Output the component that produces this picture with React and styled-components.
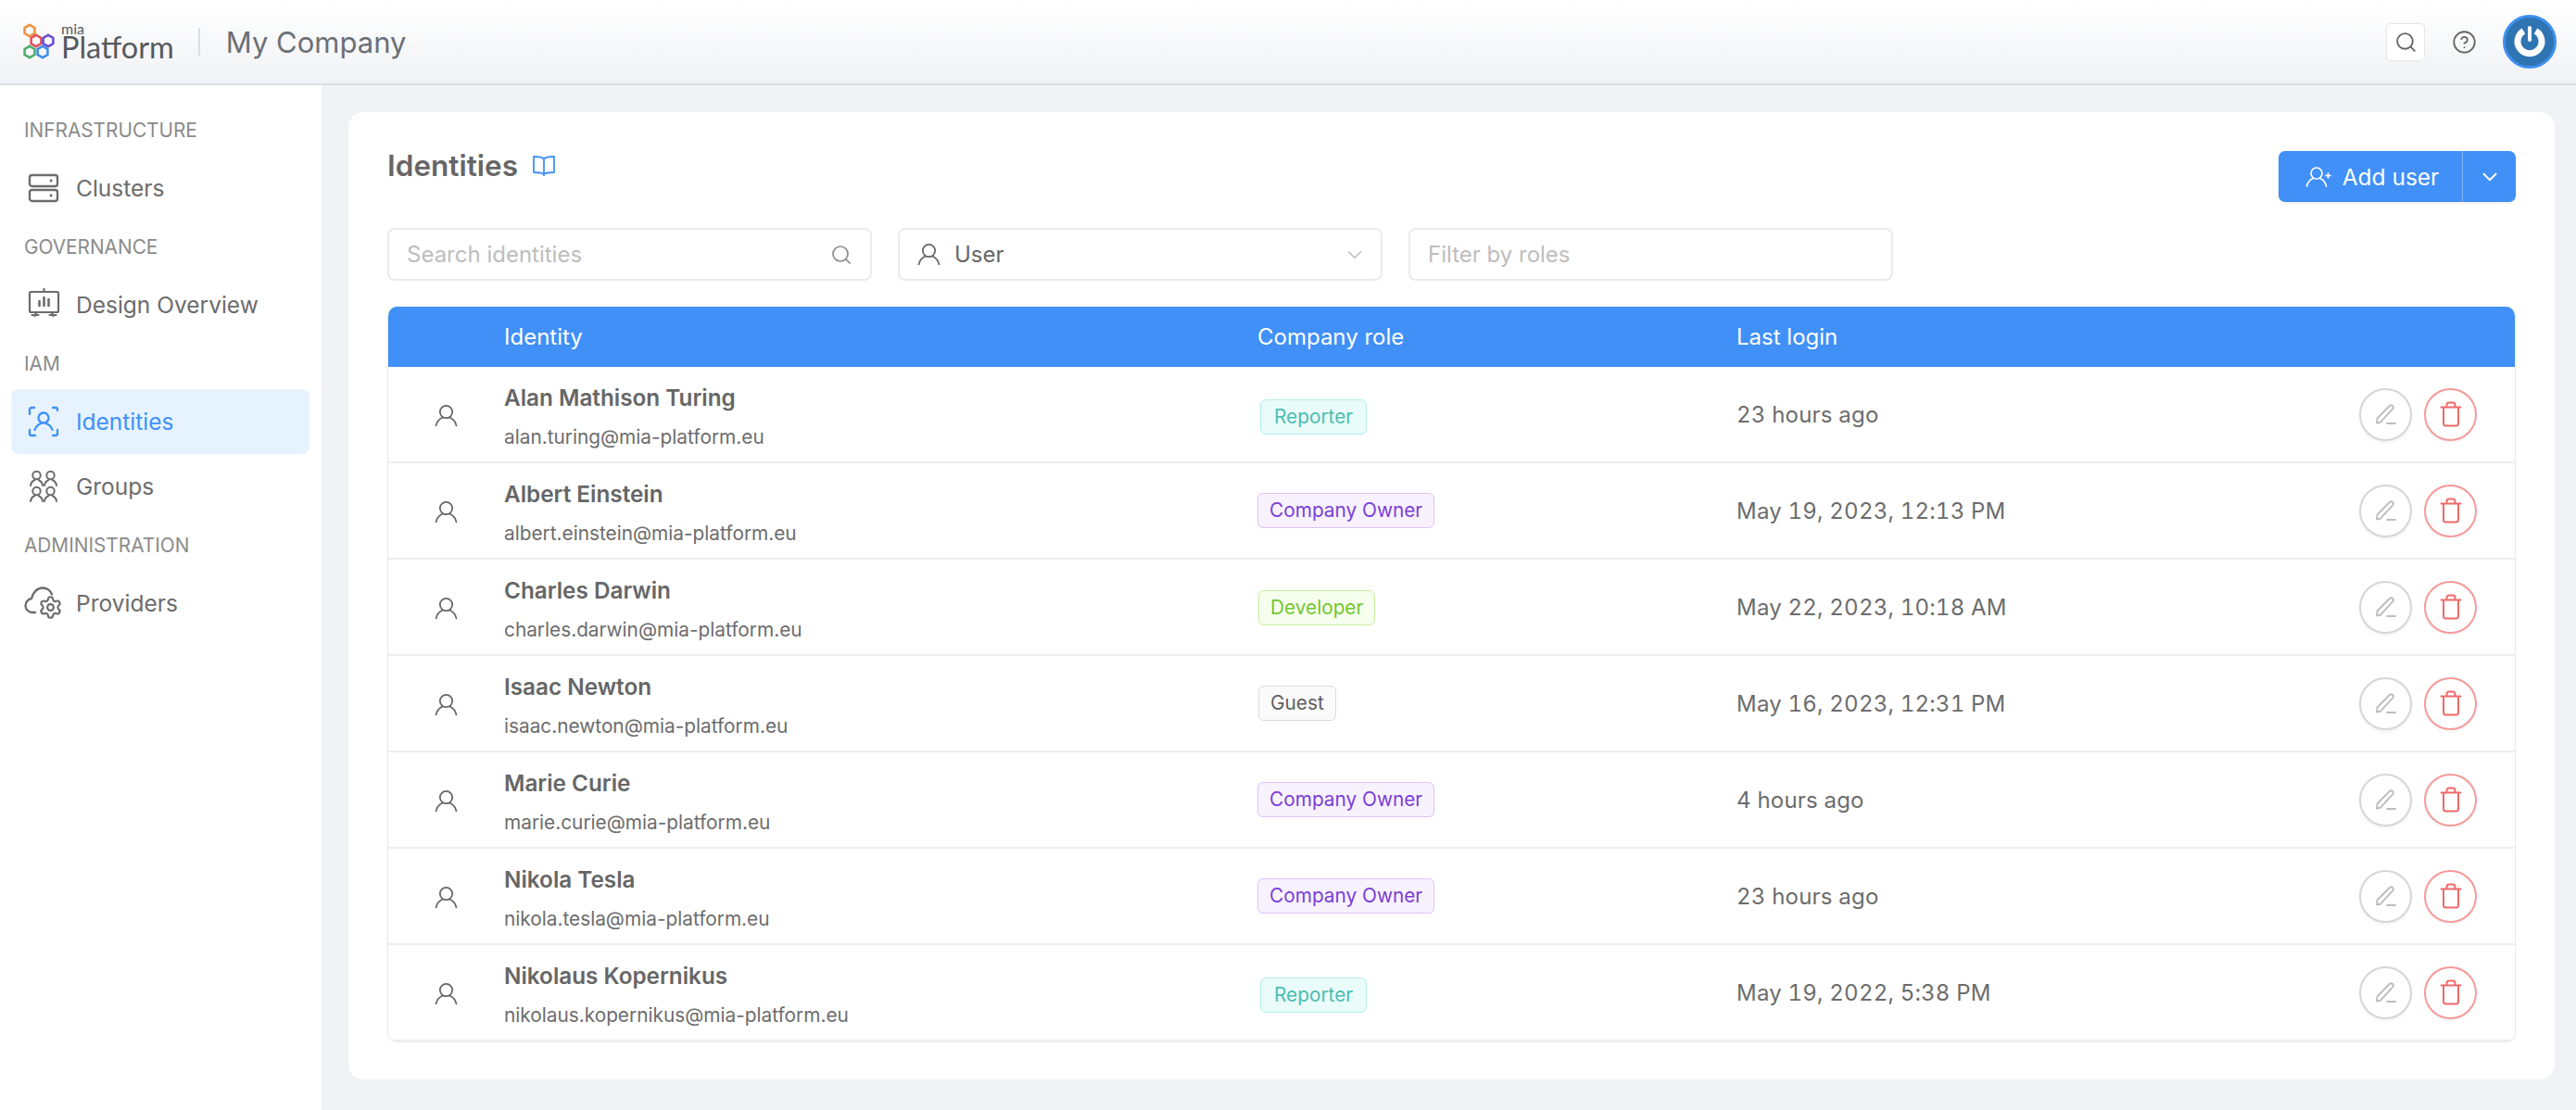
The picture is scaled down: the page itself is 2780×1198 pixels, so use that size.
import styled, { createGlobalStyle } from "styled-components";
import { ChevronDown, CircleHelp, Search, Settings } from "lucide-react";

const GlobalStyle = createGlobalStyle`
  html, body {
    margin: 0;
    padding: 0;
    background: #f0f2f6;
    font-family: Inter, "Noto Sans", sans-serif;
    overflow: hidden;
  }
  * {
    box-sizing: border-box;
  }
`;

const Page = styled.div`
  width: 2780px;
  height: 1198px;
  display: flex;
  flex-direction: column;
`;

const Header = styled.header`
  height: 92px;
  flex: none;
  display: flex;
  align-items: center;
  padding: 0 21px 0 25px;
  background: linear-gradient(180deg, #ffffff 0%, #f1f2f5 100%);
  border-bottom: 2px solid #dcdde0;
`;

const Logo = styled.div`
  display: flex;
  align-items: center;
  gap: 5px;
`;

const LogoWord = styled.div`
  display: flex;
  flex-direction: column;
  color: #555a5e;
  font-family: Lato, sans-serif;
`;

const LogoMia = styled.span`
  font-size: 16px;
  line-height: 11px;
`;

const LogoPlatform = styled.span`
  font-size: 32.5px;
  line-height: 30px;
`;

const HeaderDivider = styled.div`
  width: 2px;
  height: 30px;
  margin: 0 28px 0 26px;
  background: #dcdde0;
`;

const CompanyName = styled.div`
  font-size: 31px;
  color: #6b6f75;
`;

const HeaderActions = styled.div`
  margin-left: auto;
  display: flex;
  align-items: center;
`;

const HeaderSearch = styled.div`
  width: 42px;
  height: 41px;
  display: flex;
  align-items: center;
  justify-content: center;
  background: #fff;
  border: 1px solid #e6e6e6;
  border-radius: 5px;
  color: #666;
`;

const HelpIcon = styled(CircleHelp)`
  margin: 0 28px 0 29px;
  color: #666;
`;

const Avatar = styled.div`
  width: 58px;
  height: 58px;
  border-radius: 50%;
  background: #2f74b2;
  border: 3px solid #3d8fee;
  display: flex;
  align-items: center;
  justify-content: center;
`;

const Body = styled.div`
  flex: 1;
  display: flex;
  min-height: 0;
`;

const Sidebar = styled.nav`
  width: 347px;
  flex: none;
  padding: 20px 13px 0 12px;
  background: #fff;
`;

const SectionLabel = styled.div`
  height: 56px;
  padding-left: 14px;
  display: flex;
  align-items: center;
  font-size: 20.8px;
  color: #8b8b8b;
`;

const NavItem = styled.div`
  height: 70px;
  display: flex;
  align-items: center;
  gap: 17px;
  padding-left: 17px;
  border-radius: 8px;
  font-size: 24.5px;
  color: ${(p) => (p.$active ? "#3f90f7" : "#6c6c6c")};
  background: ${(p) => (p.$active ? "#e6f3fe" : "transparent")};
`;

const NavIcon = styled.span`
  width: 36px;
  flex: none;
  display: flex;
  justify-content: center;
`;

const Main = styled.main`
  flex: 1;
  min-width: 0;
  padding: 29px 23px 33px 29px;
`;

const Card = styled.section`
  height: 100%;
  padding: 42px;
  background: #fff;
  border-radius: 16px;
`;

const TitleRow = styled.div`
  display: flex;
  justify-content: space-between;
  align-items: flex-start;
`;

const TitleGroup = styled.div`
  display: flex;
  align-items: center;
  gap: 15px;
  height: 32px;
`;

const Title = styled.h1`
  margin: 0;
  font-size: 31.5px;
  line-height: 32px;
  font-weight: 600;
  color: #666;
`;

const SplitButton = styled.div`
  width: 256px;
  height: 55px;
  display: flex;
  color: #fff;
  background: #4090f7;
  border-radius: 7px;
  box-shadow: 0 2px 3px rgba(0, 0, 0, 0.06);
`;

const AddButton = styled.div`
  width: 199px;
  display: flex;
  align-items: center;
  justify-content: center;
  gap: 12px;
  padding-left: 4px;
  font-size: 24.5px;
  border-right: 1px solid #7fb4f9;
`;

const MoreButton = styled.div`
  flex: 1;
  display: flex;
  align-items: center;
  justify-content: center;
`;

const Filters = styled.div`
  margin: 28px 0;
  display: flex;
  gap: 28px;
`;

const Field = styled.div`
  width: 523px;
  height: 57px;
  display: flex;
  align-items: center;
  justify-content: space-between;
  padding: ${(p) => (p.$select ? "0 15px 0 19px" : "0 19px")};
  font-size: 24px;
  border: 2px solid #ebebeb;
  border-radius: 8px;
  color: ${(p) => (p.$select ? "#666" : "#bdbdbd")};
`;

const FieldValue = styled.div`
  display: flex;
  align-items: center;
  gap: 15px;
`;

const FieldIcon = styled.span`
  display: flex;
  color: ${(p) => p.$color};
`;

const Table = styled.div`
  border: 1px solid #e9e9e9;
  border-top: 0;
  border-radius: 10px;
  overflow: hidden;
`;

const rowColumns = `
  display: grid;
  grid-template-columns: 125px 813px 517px 1fr;
  align-items: center;
`;

const TableHead = styled.div`
  ${rowColumns}
  height: 65px;
  margin: 0 -1px;
  padding-left: 1px;
  font-size: 24px;
  color: #fff;
  background: #4090f7;
`;

const Row = styled.div`
  ${rowColumns}
  height: 104px;
  border-bottom: 2px solid #eeeeee;
`;

const UserCell = styled.div`
  display: flex;
  justify-content: center;
  padding: 2px 0 0 0;
  color: #666;
`;

const Identity = styled.div`
  padding-top: 6px;
  display: flex;
  flex-direction: column;
  gap: 13px;
`;

const Name = styled.div`
  font-size: 24.3px;
  line-height: 29px;
  font-weight: 600;
  color: #666;
`;

const Email = styled.div`
  font-size: 20.8px;
  line-height: 29px;
  color: #6c6c6c;
`;

const Tag = styled.span`
  display: inline-block;
  height: 38px;
  padding: ${(p) => p.$tone.padding};
  font-size: 20.8px;
  line-height: 35px;
  border: 1px solid ${(p) => p.$tone.border};
  border-radius: 6px;
  color: ${(p) => p.$tone.color};
  background: ${(p) => p.$tone.bg};
  margin: ${(p) => p.$tone.margin};
`;

const LastLogin = styled.div`
  font-size: 24px;
  letter-spacing: 0.2px;
  font-variant-numeric: tabular-nums;
  color: #6c6c6c;
`;

const LoginCell = styled.div`
  display: flex;
  align-items: center;
  justify-content: space-between;
`;

const Actions = styled.div`
  display: flex;
  justify-content: flex-end;
  gap: 13px;
  padding-right: 41px;
`;

const RoundButton = styled.div`
  width: 57px;
  height: 57px;
  display: flex;
  align-items: center;
  justify-content: center;
  border-radius: 50%;
  background: #fff;
  border: 2px solid ${(p) => (p.$danger ? "#f59a9a" : "#d6d6d6")};
  color: ${(p) => (p.$danger ? "#ee6a6a" : "#bdbdbd")};
  box-shadow: 0 2px 3px rgba(0, 0, 0, 0.05);
`;

const TONES = {
  Reporter: { color: "#4dbdb1", bg: "#e9fcfa", border: "#b5efe8", margin: "6px 0 0 3px", padding: "0 14px" },
  "Company Owner": { color: "#7a3fd6", bg: "#f8f1fe", border: "#dcc3f6", margin: "0", padding: "0 12px" },
  Developer: { color: "#74c62f", bg: "#f6ffed", border: "#c5eea2", margin: "2px 0 0 1px", padding: "0 12px" },
  Guest: { color: "#5f5f5f", bg: "#fafafa", border: "#dcdcdc", margin: "0 0 0 1px", padding: "0 12px" },
};

const USERS = [
  { name: "Alan Mathison Turing", email: "alan.turing@mia-platform.eu", role: "Reporter", login: "23 hours ago" },
  { name: "Albert Einstein", email: "albert.einstein@mia-platform.eu", role: "Company Owner", login: "May 19, 2023, 12:13 PM" },
  { name: "Charles Darwin", email: "charles.darwin@mia-platform.eu", role: "Developer", login: "May 22, 2023, 10:18 AM" },
  { name: "Isaac Newton", email: "isaac.newton@mia-platform.eu", role: "Guest", login: "May 16, 2023, 12:31 PM" },
  { name: "Marie Curie", email: "marie.curie@mia-platform.eu", role: "Company Owner", login: "4 hours ago" },
  { name: "Nikola Tesla", email: "nikola.tesla@mia-platform.eu", role: "Company Owner", login: "23 hours ago" },
  { name: "Nikolaus Kopernikus", email: "nikolaus.kopernikus@mia-platform.eu", role: "Reporter", login: "May 19, 2022, 5:38 PM" },
];

const stroke = { fill: "none", stroke: "currentColor", strokeLinecap: "round", strokeLinejoin: "round" };

const UserIcon = ({ size = 25, width = 1.7 }) => (
  <svg width={size} height={size} viewBox="0 0 24 24" {...stroke} strokeWidth={width}>
    <circle cx="12" cy="8.2" r="6.4" />
    <path d="M1.5 22.5c.8-4 3.4-7 6.8-8.600M22.500 22.500c-.8-4-3.400-7-6.800-8.600" />
  </svg>
);

const Hexagon = ({ x, y, color }) => (
  <polygon
    points={`${x},${y - 6.2} ${x + 5.4},${y - 3.1} ${x + 5.4},${y + 3.1} ${x},${y + 6.2} ${x - 5.4},${y + 3.1} ${x - 5.4},${y - 3.1}`}
    fill="none"
    stroke={color}
    strokeWidth="2.6"
  />
);

const LogoMark = () => (
  <svg width="36" height="40" viewBox="0 0 36 40">
    <Hexagon x={7} y={8} color="#ef9440" />
    <Hexagon x={14} y={19} color="#e2525c" />
    <Hexagon x={27} y={19} color="#6a4fd0" />
    <Hexagon x={7} y={31} color="#4fae6c" />
    <Hexagon x={21} y={31} color="#4090e6" />
  </svg>
);

const PowerIcon = () => (
  <svg width="40" height="40" viewBox="0 0 40 40" fill="none" stroke="#fff" strokeLinecap="round">
    <path d="M13.5 8.5a13 13 0 1 0 13 0" strokeWidth="7" strokeLinecap="butt" />
    <path d="M20 5v13" strokeWidth="4" />
  </svg>
);

const ClustersIcon = () => (
  <svg width="34" height="34" viewBox="0 0 34 34" {...stroke} strokeWidth="2.4">
    <rect x="2" y="3" width="30" height="12" rx="2.5" />
    <rect x="2" y="19" width="30" height="12" rx="2.5" />
    <path d="M25 9h.2M25 25h.2" strokeWidth="2.8" />
  </svg>
);

const OverviewIcon = () => (
  <svg width="35" height="36" viewBox="0 0 34 36" {...stroke} strokeWidth="2.2">
    <path d="M17 1v3" />
    <rect x="1.5" y="4" width="31" height="22" rx="1.5" />
    <path d="M12 14v5M17 10v9M22 12v7" strokeWidth="2.6" />
    <path d="M7 30l2-4M27 30l-2-4M4 29h7M23 29h7" />
  </svg>
);

const IdentitiesIcon = () => (
  <svg width="34" height="34" viewBox="0 0 34 34" {...stroke} strokeWidth="2.3">
    <path d="M2 9V4a2 2 0 0 1 2-2h3M27 2h3a2 2 0 0 1 2 2v1M2 26v4a2 2 0 0 0 2 2h4M32 26v4a2 2 0 0 1-2 2h-3" />
    <circle cx="17" cy="13" r="5.500" />
    <path d="M7.500 26c1.200-3.500 3.600-6 7-7M26.500 26c-1.200-3.500-3.600-6-7-7" />
  </svg>
);

const GroupPerson = ({ x, y }) => (
  <g transform={`translate(${x} ${y})`}>
    <circle cx="7.5" cy="5" r="4.2" />
    <path d="M1 16c.4-3 2.200-5 4.400-6M14 16c-.4-3-2.200-5-4.400-6" />
  </g>
);

const GroupsIcon = () => (
  <svg width="34" height="34" viewBox="0 0 34 34" {...stroke} strokeWidth="2">
    <GroupPerson x={2} y={0} />
    <GroupPerson x={17} y={0} />
    <GroupPerson x={2} y={17} />
    <GroupPerson x={17} y={17} />
  </svg>
);

const ProvidersIcon = () => (
  <svg width="42" height="36" viewBox="0 0 42 36" {...stroke} strokeWidth="2.3" style={{ flex: "none" }}>
    <path d="M12 28H9C4.500 28 1.500 24.500 1.500 20.500c0-4 3-7 6.500-7.500C9.500 6.500 14 1.500 20 1.500c4.500 0 8.500 3 10 7" />
    <Settings x="15" y="9" width="27" height="27" strokeWidth="1.9" />
  </svg>
);

const BookIcon = () => (
  <svg width="26" height="24" viewBox="0 0 26 24" fill="none" stroke="#4090f7" strokeWidth="1.8" strokeLinejoin="round">
    <path d="M13 4.500C11 2.500 8 2 2 2v17c6 0 9 .5 11 2 2-1.500 5-2 11-2V2c-6 0-9 .5-11 2.500zM13 4.500V23" />
  </svg>
);

const AddUserIcon = () => (
  <svg width="28" height="24" viewBox="0 0 28 24" {...stroke} strokeWidth="1.7">
    <circle cx="12" cy="8" r="6" />
    <path d="M1.500 22c.8-4 3.400-7 6.800-8.500M22.500 22c-.8-4-3.400-7-6.800-8.500M22 10.500h5M24.500 8v5" />
  </svg>
);

const EditIcon = () => (
  <svg width="24" height="24" viewBox="0 0 24 24" {...stroke} strokeWidth="1.9">
    <path d="M2 21.500l.5-5L15.800 3a2.300 2.300 0 0 1 3.300 3.300L5.800 20.800z" />
    <path d="M13 22h9" />
  </svg>
);

const TrashIcon = () => (
  <svg width="24" height="28" viewBox="0 0 24 28" {...stroke} strokeWidth="2">
    <path d="M1.500 6.500h21M4 6.500V24a2.500 2.500 0 0 0 2.500 2.500h11A2.500 2.500 0 0 0 20 24V6.500M7.500 6.500V4a2.500 2.500 0 0 1 2.500-2.500h4A2.500 2.500 0 0 1 16.500 4v2.500" />
  </svg>
);

const NAV = [
  { label: "INFRASTRUCTURE" },
  { label: "Clusters", icon: <ClustersIcon />, item: true },
  { label: "GOVERNANCE" },
  { label: "Design Overview", icon: <OverviewIcon />, item: true },
  { label: "IAM" },
  { label: "Identities", icon: <IdentitiesIcon />, item: true, active: true },
  { label: "Groups", icon: <GroupsIcon />, item: true },
  { label: "ADMINISTRATION" },
  { label: "Providers", icon: <ProvidersIcon />, item: true },
];

const App = () => {
  return (
    <Page>
      <GlobalStyle />
      <Header>
        <Logo>
          <LogoMark />
          <LogoWord>
            <LogoMia>mia</LogoMia>
            <LogoPlatform>Platform</LogoPlatform>
          </LogoWord>
        </Logo>
        <HeaderDivider />
        <CompanyName>My Company</CompanyName>
        <HeaderActions>
          <HeaderSearch>
            <Search size={25} strokeWidth={1.8} />
          </HeaderSearch>
          <HelpIcon size={27} strokeWidth={1.6} />
          <Avatar>
            <PowerIcon />
          </Avatar>
        </HeaderActions>
      </Header>
      <Body>
        <Sidebar>
          {NAV.map((entry) =>
            entry.item ? (
              <NavItem key={entry.label} $active={entry.active}>
                <NavIcon>{entry.icon}</NavIcon>
                {entry.label}
              </NavItem>
            ) : (
              <SectionLabel key={entry.label}>{entry.label}</SectionLabel>
            )
          )}
        </Sidebar>
        <Main>
          <Card>
            <TitleRow>
              <TitleGroup>
                <Title>Identities</Title>
                <BookIcon />
              </TitleGroup>
              <SplitButton>
                <AddButton>
                  <AddUserIcon />
                  Add user
                </AddButton>
                <MoreButton>
                  <ChevronDown size={26} strokeWidth={1.8} />
                </MoreButton>
              </SplitButton>
            </TitleRow>
            <Filters>
              <Field>
                Search identities
                <FieldIcon $color="#8c8c8c">
                  <Search size={24} strokeWidth={1.7} />
                </FieldIcon>
              </Field>
              <Field $select>
                <FieldValue>
                  <UserIcon />
                  User
                </FieldValue>
                <FieldIcon $color="#bdbdbd">
                  <ChevronDown size={26} strokeWidth={1.5} />
                </FieldIcon>
              </Field>
              <Field>Filter by roles</Field>
            </Filters>
            <Table>
              <TableHead>
                <span />
                <span>Identity</span>
                <span>Company role</span>
                <span>Last login</span>
              </TableHead>
              {USERS.map((user) => (
                <Row key={user.email}>
                  <UserCell>
                    <UserIcon />
                  </UserCell>
                  <Identity>
                    <Name>{user.name}</Name>
                    <Email>{user.email}</Email>
                  </Identity>
                  <div>
                    <Tag $tone={TONES[user.role]}>{user.role}</Tag>
                  </div>
                  <LoginCell>
                    <LastLogin>{user.login}</LastLogin>
                    <Actions>
                      <RoundButton>
                        <EditIcon />
                      </RoundButton>
                      <RoundButton $danger>
                        <TrashIcon />
                      </RoundButton>
                    </Actions>
                  </LoginCell>
                </Row>
              ))}
            </Table>
          </Card>
        </Main>
      </Body>
    </Page>
  );
};

export default App;
